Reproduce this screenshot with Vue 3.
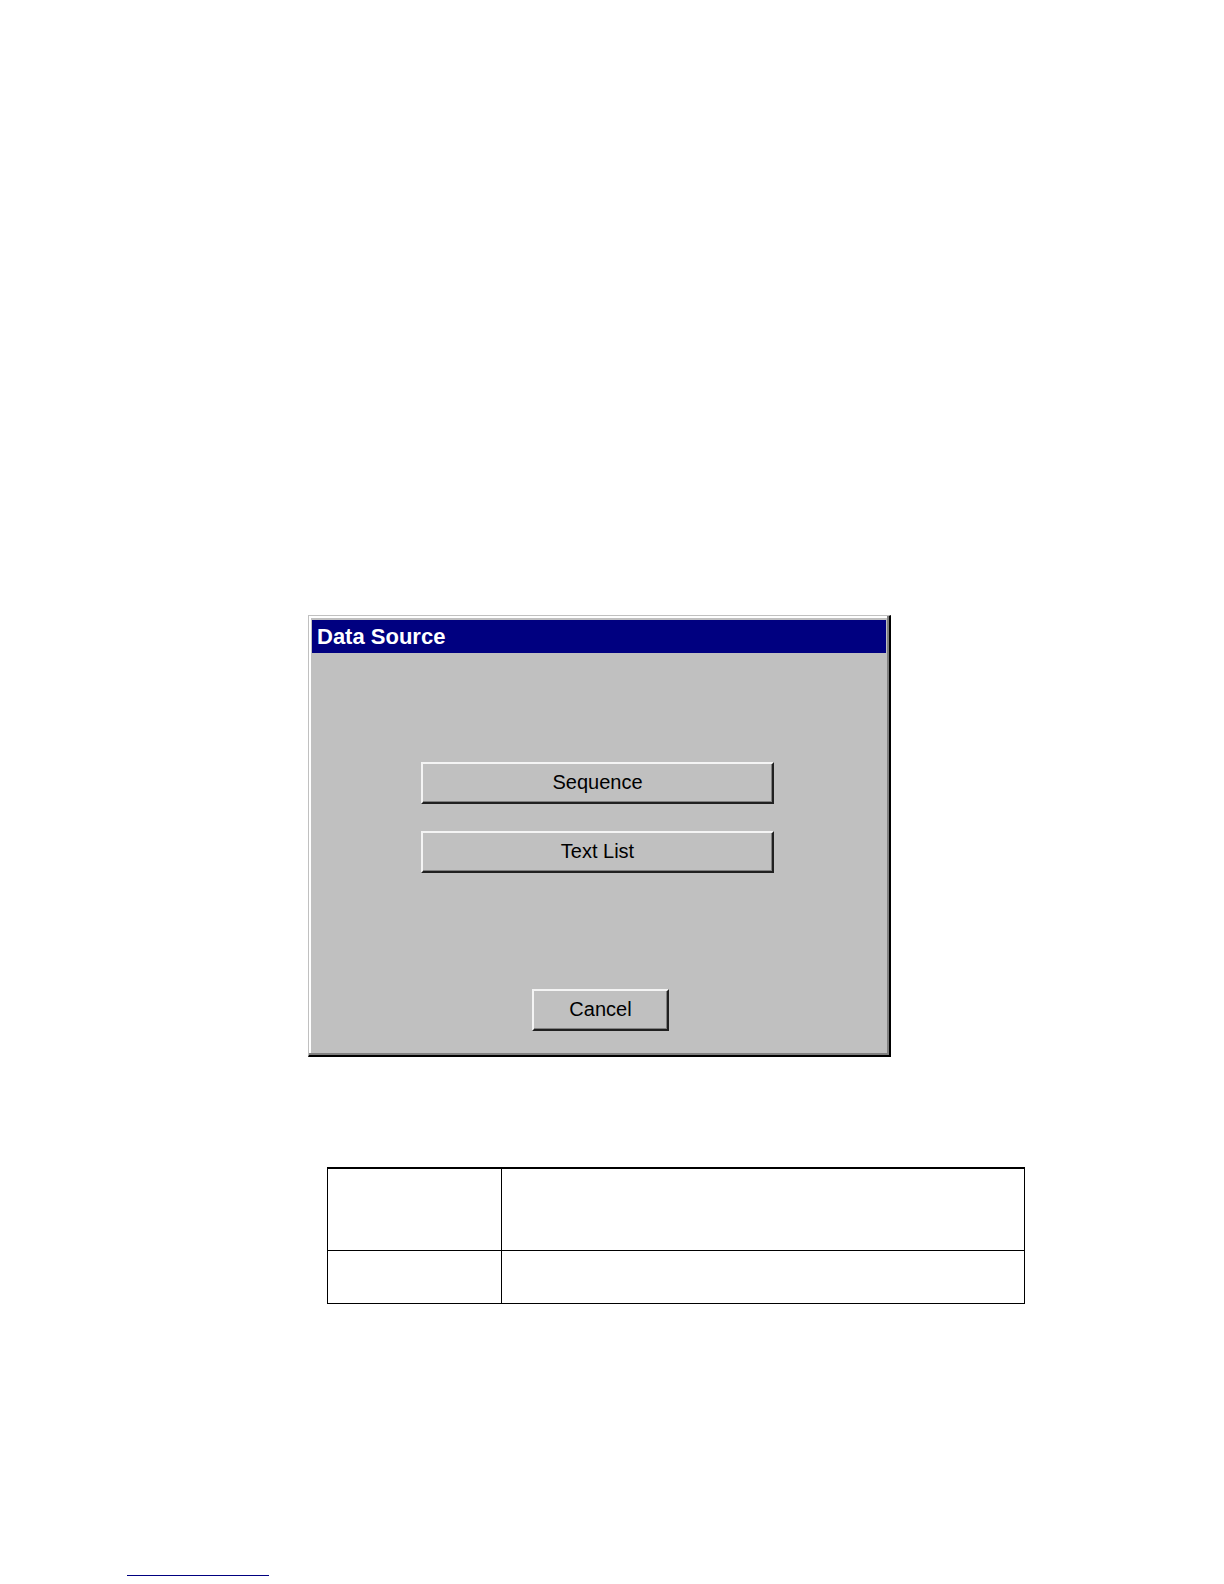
<script setup>
import { ref } from "vue";

const sources = ["Sequence", "Text List"];

const rows = [
    { key: "first", name: "", description: "" },
    { key: "second", name: "", description: "" },
];

const selected = ref(null);

const handleSelect = (source) => {
    selected.value = source;
};

const handleCancel = () => {
    selected.value = null;
};
</script>

<template>
    <div class="page">
        <main class="content">
            <section class="dialog" role="dialog" aria-labelledby="dialog-title">
                <h1 id="dialog-title" class="dialog__title">Data Source</h1>

                <div class="dialog__body">
                    <div class="dialog__choices">
                        <button
                            v-for="source in sources"
                            :key="source"
                            type="button"
                            class="btn"
                            @click="handleSelect(source)">
                            {{ source }}
                        </button>
                    </div>
                    <button
                        type="button"
                        class="btn btn--cancel"
                        @click="handleCancel">
                        Cancel
                    </button>
                </div>
            </section>

            <table class="notes">
                <tbody>
                    <tr v-for="row in rows" :key="row.key">
                        <td class="notes__name">{{ row.name }}</td>
                        <td>{{ row.description }}</td>
                    </tr>
                </tbody>
            </table>
        </main>

        <footer class="footer">
            <a class="footer__link" href="#"></a>
        </footer>
    </div>
</template>

<style>
body {
    background: #fff;
}
</style>

<style scoped>
.page {
    display: flex;
    flex-direction: column;
    justify-content: space-between;
    box-sizing: border-box;
    min-height: 100vh;
    padding: 615px 0 8px;
    font-family: "Liberation Sans", Arial, sans-serif;
    color: #000;
}

.content {
    display: flex;
    flex-direction: column;
    gap: 110px;
    padding: 0 199px 0 308px;
}

/* 对话框 */
.dialog {
    box-sizing: border-box;
    width: 100%;
    max-width: 583px;
    padding: 4px 3px 3px;
    background: #c0c0c0;
    border: 1px solid #c0c0c0;
    border-right: 2px solid #000;
    border-bottom: 2px solid #000;
    box-shadow: inset -2px -2px #808080, inset 2px 2px #fff;
}

.dialog__title {
    margin: 0;
    padding: 0 5px;
    background: #000080;
    color: #fff;
    font-size: 22px;
    font-weight: bold;
    line-height: 33px;
}

.dialog__body {
    display: flex;
    flex-direction: column;
    align-items: center;
    gap: 116px;
    padding: 109px 0 21px 3px;
}

.dialog__choices {
    display: flex;
    flex-direction: column;
    gap: 27px;
    width: 100%;
    max-width: 353px;
    margin-right: 6px;
}

/* 按钮 */
.btn {
    box-sizing: border-box;
    height: 42px;
    padding: 0 0 2px;
    background: #c0c0c0;
    border: 2px solid #f4f4f4;
    border-right-color: #202020;
    border-bottom-color: #202020;
    border-radius: 0;
    box-shadow: inset -1px -1px #808080;
    color: #000;
    font-family: inherit;
    font-size: 20px;
    line-height: 24px;
}

.btn--cancel {
    width: 137px;
}

/* 表格 */
.notes {
    margin-left: 19px;
    border-collapse: collapse;
    table-layout: fixed;
}

.notes td {
    height: 52px;
    padding: 0;
    border: 1px solid #000;
}

.notes tr:first-child td {
    height: 81px;
    border-top-width: 2px;
}

.notes__name {
    width: 173px;
}

/* 页脚 */
.footer {
    padding-left: 127px;
}

.footer__link {
    display: block;
    width: 142px;
    border-bottom: 1px solid #000080;
}
</style>
